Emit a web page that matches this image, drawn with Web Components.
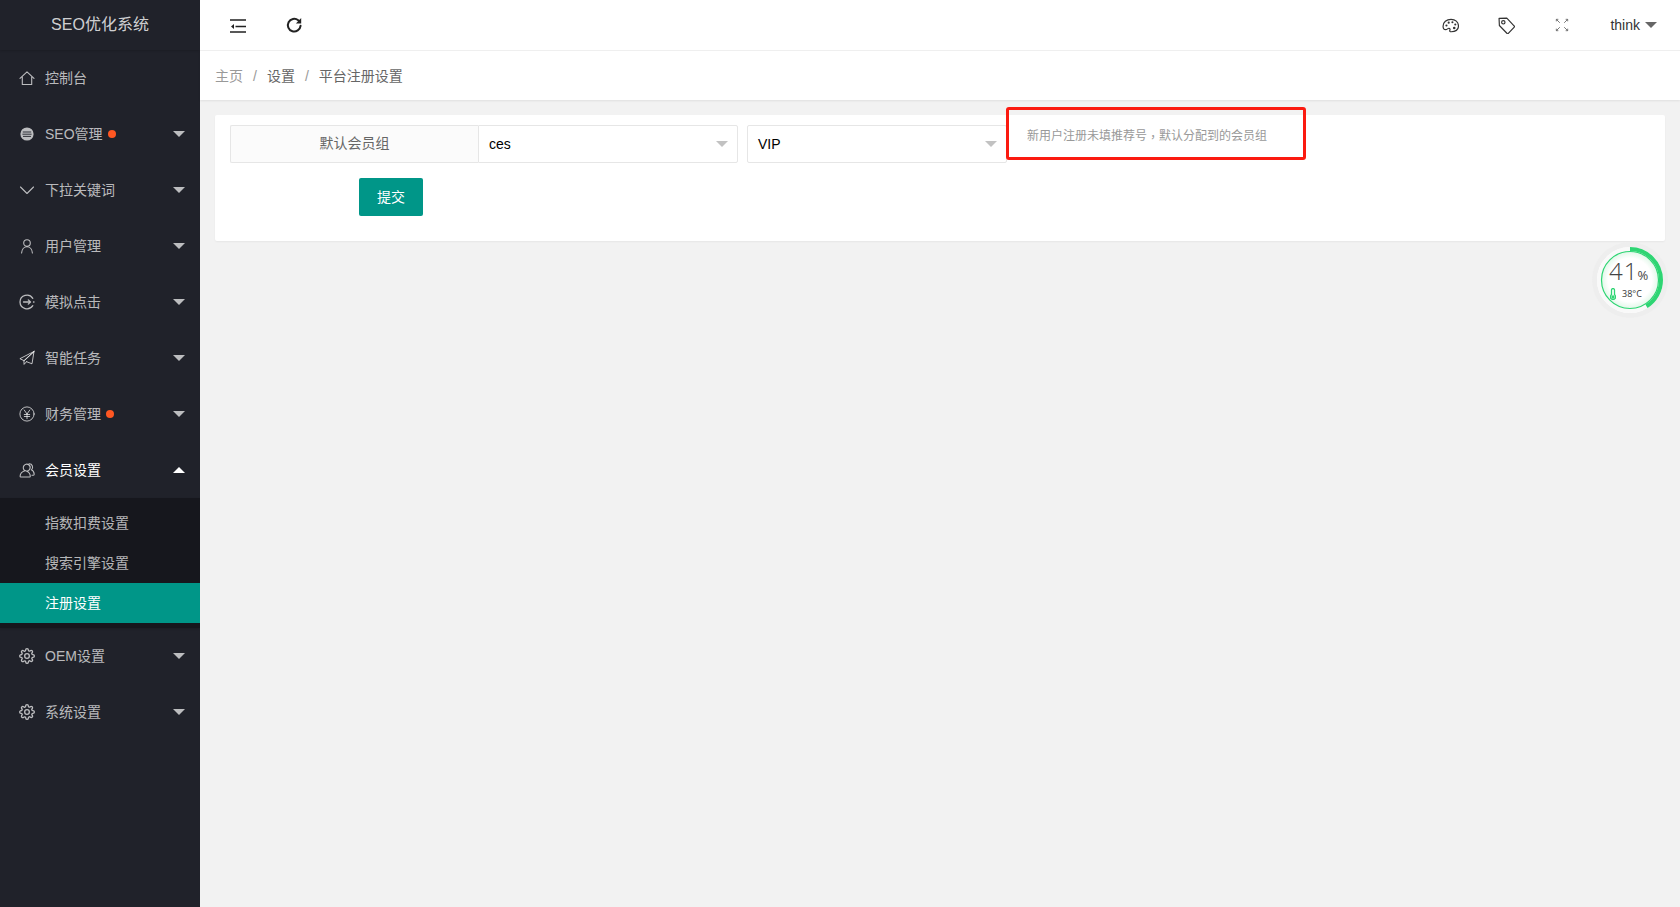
<!DOCTYPE html>
<html lang="zh">
<head>
<meta charset="utf-8">
<title>SEO优化系统</title>
<style>
html,body{margin:0;height:100%;overflow:hidden}
body{font:14px/1.5 "Liberation Sans","Noto Sans CJK SC",sans-serif;color:#666;background:#f2f2f2}
</style>
</head>
<body>
<admin-app>
  <admin-sidebar slot="side" brand="SEO优化系统">
    <nav-item icon="home">控制台</nav-item>
    <nav-item icon="list" dot arrow>SEO管理</nav-item>
    <nav-item icon="chev" arrow>下拉关键词</nav-item>
    <nav-item icon="user" arrow>用户管理</nav-item>
    <nav-item icon="click" arrow>模拟点击</nav-item>
    <nav-item icon="plane" arrow>智能任务</nav-item>
    <nav-item icon="yen" dot arrow>财务管理</nav-item>
    <nav-item icon="group" arrow open>会员设置</nav-item>
    <nav-sub>
      <nav-sub-item>指数扣费设置</nav-sub-item>
      <nav-sub-item>搜索引擎设置</nav-sub-item>
      <nav-sub-item active>注册设置</nav-sub-item>
    </nav-sub>
    <nav-item icon="gear" arrow>OEM设置</nav-item>
    <nav-item icon="gear" arrow>系统设置</nav-item>
  </admin-sidebar>
  <top-bar slot="main" user="think"></top-bar>
  <bread-crumb slot="main"><span>主页</span><span>设置</span><span>平台注册设置</span></bread-crumb>
  <form-card slot="main">
    <form-row label="默认会员组" hint="新用户注册未填推荐号，默认分配到的会员组">
      <form-select first>ces</form-select>
      <form-select>VIP</form-select>
    </form-row>
    <submit-button>提交</submit-button>
  </form-card>
  <cpu-gauge slot="main" percent="41" temp="38°C"></cpu-gauge>
</admin-app>
<script>
const ICONS={
home:'<path d="M1 8.400 8 1.800l7 6.600M3.300 7v7.500h9.400V7"/>',
list:'<circle cx="8" cy="8" r="6.600" fill="currentColor" stroke="none"/><path d="M4.200 6h7.600M3.800 8.200h8.400M4.400 10.400h7.200" stroke="#20222a" stroke-width=".9"/>',
chev:'<path d="M1.500 5 8 11.500 14.500 5"/>',
user:'<circle cx="8" cy="5" r="3.300"/><path d="M2.600 15c.2-3.600 2.400-6.300 5.400-6.300s5.200 2.700 5.400 6.300"/>',
click:'<path d="M13.800 4.300A7 7 0 0 0 1 8M13.800 11.700A7 7 0 0 1 1 8M4.500 8h7M9.300 5.900 11.500 8 9.300 10.100M14.500 8h.5" stroke-width="1.300"/>',
plane:'<path d="M15 1.500 .9 8.700l4 1.900zM15 1.500 4.900 10.600l.2 3.800 2.400-2.700M15 1.500l-2 12.300-5.500-2.100" stroke-width="1"/>',
yen:'<circle cx="8" cy="8" r="7.100" stroke-width="1"/><path d="m5.200 4 2.800 4 2.800-4M5.300 8.500h5.400M5.300 10.500h5.400M8 8v4.700" stroke-width="1"/>',
group:'<path d="M9.700 2.700A3.500 3.500 0 1 0 6 8.800c-2.800.8-4.800 2.700-4.900 5.500 0 .5.300.7.700.7h8.800c.4 0 .7-.2.700-.7-.1-2.800-2.100-4.700-4.900-5.500a3.500 3.500 0 0 0 3.300-6.100zM10 1.800a3.400 3.400 0 0 1 2.400 6c1.700.8 2.700 2.500 2.800 4.500 0 .6-.3.900-.7.900H13"/>',
gear:'<g transform="scale(.667)"><circle cx="12" cy="12" r="3.500" stroke-width="2"/><path d="M19.400 15a1.650 1.650 0 0 0 .33 1.820l.06.06a2 2 0 0 1 0 2.830 2 2 0 0 1-2.830 0l-.06-.06a1.650 1.650 0 0 0-1.820-.33 1.650 1.650 0 0 0-1 1.510V21a2 2 0 0 1-2 2 2 2 0 0 1-2-2v-.09A1.650 1.650 0 0 0 9 19.400a1.650 1.650 0 0 0-1.820.33l-.06.06a2 2 0 0 1-2.830 0 2 2 0 0 1 0-2.830l.06-.06a1.650 1.650 0 0 0 .33-1.820 1.650 1.650 0 0 0-1.510-1H3a2 2 0 0 1-2-2 2 2 0 0 1 2-2h.09A1.650 1.650 0 0 0 4.600 9a1.650 1.650 0 0 0-.33-1.820l-.06-.06a2 2 0 0 1 0-2.830 2 2 0 0 1 2.830 0l.06.06a1.650 1.650 0 0 0 1.820.33H9a1.650 1.650 0 0 0 1-1.510V3a2 2 0 0 1 2-2 2 2 0 0 1 2 2v.09a1.650 1.650 0 0 0 1 1.510 1.650 1.650 0 0 0 1.820-.33l.06-.06a2 2 0 0 1 2.830 0 2 2 0 0 1 0 2.830l-.06.06a1.650 1.650 0 0 0-.33 1.820V9a1.650 1.650 0 0 0 1.510 1H21a2 2 0 0 1 2 2 2 2 0 0 1-2 2h-.09a1.650 1.650 0 0 0-1.510 1z" stroke-width="2"/></g>',
menu:'<path d="M0 3h16M5.500 9.500H16M0 15h16" stroke-width="1.500" stroke-linecap="butt"/><path d="M4 7.100 1 9.500l3 2.400z" fill="currentColor" stroke="none"/>',
refresh:'<path d="M13.700 8.300A6 6 0 1 1 11.500 3L13 4.200" stroke-width="1.900"/><path d="M14.300 1v5h-5z" fill="currentColor" stroke="none"/>',
palette:'<path d="M8.500 2.200C4.200 2.200 1 5 1 8.600c0 2 1.200 3.300 2.500 3.300 1.500 0 1.800-1.300 3-1.300 1.300 0 1.200 1.300.8 2.100-.3.700.3 1.200 1.300 1.200 4 0 6.900-2 6.900-5.500 0-3.700-3-6.200-7-6.200z"/><circle cx="4.200" cy="8" r="1" fill="currentColor" stroke="none"/><circle cx="6.300" cy="5.300" r="1" fill="currentColor" stroke="none"/><circle cx="9.800" cy="4.900" r="1" fill="currentColor" stroke="none"/><circle cx="12.500" cy="7" r="1" fill="currentColor" stroke="none"/><circle cx="11.500" cy="10.300" r="1.200" fill="currentColor" stroke="none"/>',
tag:'<path d="M1 1.300 8.300 1l7 7.500c.3.300.3.700 0 1l-5.600 6c-.3.300-.8.300-1.100 0L1.300 8z"/><circle cx="5" cy="5" r="1.600"/>',
full:'<path d="M1.500 3.800V1.500h2.300M1.500 1.500 5.500 5.500M14.500 3.800V1.500h-2.300M14.500 1.500l-4 4M1.500 12.200v2.300h2.300M1.500 14.500l4-4M14.500 12.200v2.300h-2.300M14.500 14.500l-4-4" stroke-width="1" stroke-linecap="butt"/>'
};
function svgIcon(name,w,h){
  return `<svg viewBox="0 0 16 16" width="${w}" height="${h||w}" fill="none" stroke="currentColor" stroke-width="1.100" stroke-linecap="round" stroke-linejoin="round" aria-hidden="true">${ICONS[name]}</svg>`;
}
class Base extends HTMLElement{
  render(html){ if(!this.shadowRoot) this.attachShadow({mode:'open'}); this.shadowRoot.innerHTML=html; }
}
customElements.define('admin-app',class extends Base{connectedCallback(){this.render(`<style>
:host{display:grid;grid-template-columns:200px 1fr;height:907px;position:relative}
main{display:flex;flex-direction:column;min-width:0;position:relative}
</style><slot name="side"></slot><main><slot name="main"></slot></main>`)}});

customElements.define('admin-sidebar',class extends Base{connectedCallback(){this.render(`<style>
:host{display:block;background:#20222a;height:907px;overflow:hidden}
.logo{height:50px;line-height:50px;text-align:center;font-size:16px;color:rgba(255,255,255,.8);box-shadow:0 1px 2px rgba(0,0,0,.15)}
</style><div class="logo">${this.getAttribute('brand')}</div><slot></slot>`)}});

customElements.define('nav-item',class extends Base{connectedCallback(){
  const open=this.hasAttribute('open');
  this.render(`<style>
:host{display:flex;align-items:center;height:56px;padding-left:19px;color:${open?'#fff':'rgba(255,255,255,.7)'};font-size:14px;position:relative}
.ic{width:16px;height:16px;margin-right:10px;display:block;flex:none;color:rgba(255,255,255,.7)}
.ic svg{display:block}
.dot{width:8px;height:8px;border-radius:50%;background:#ff5722;margin-left:5px}
.arrow{position:absolute;right:15px;top:25px;width:0;height:0;border:6px solid transparent;${open?'border-bottom-color:#fff;border-top-width:0':'border-top-color:rgba(255,255,255,.7);border-bottom-width:0'}}
</style><span class="ic">${svgIcon(this.getAttribute('icon'),16)}</span><slot></slot>${this.hasAttribute('dot')?'<i class="dot"></i>':''}${this.hasAttribute('arrow')?'<i class="arrow"></i>':''}`);
}});
customElements.define('nav-sub',class extends Base{connectedCallback(){this.render(`<style>
:host{display:block;background:rgba(0,0,0,.3);padding:5px 0;box-shadow:0 1px 2px rgba(0,0,0,.15)}
</style><slot></slot>`)}});
customElements.define('nav-sub-item',class extends Base{connectedCallback(){
  const a=this.hasAttribute('active');
  this.render(`<style>
:host{display:block;height:40px;line-height:40px;padding-left:45px;font-size:14px;color:${a?'#fff':'rgba(255,255,255,.7)'};background:${a?'#009688':'transparent'}}
</style><slot></slot>`)}});

customElements.define('top-bar',class extends Base{connectedCallback(){this.render(`<style>
:host{display:flex;align-items:center;height:50px;background:#fff;border-bottom:1px solid #f0f0f0;color:#333;flex:none}
.l,.r{display:flex;align-items:center}
.l{gap:40px;padding-left:30px;color:#222}
.r{margin-left:auto;color:#333}
svg{display:block}
.pal{margin-right:39px}.tag{margin-right:40px}.full{margin-right:41px;color:#666}
.user{font-size:14px;color:#333;display:flex;align-items:center;margin-right:23px}
.user i{width:0;height:0;border:6px solid transparent;border-top-color:#666;border-bottom-width:0;margin-left:5px}
</style><div class="l"><span>${svgIcon('menu',16)}</span><span>${svgIcon('refresh',17)}</span></div>
<div class="r"><span class="pal">${svgIcon('palette',17)}</span><span class="tag">${svgIcon('tag',17)}</span><span class="full">${svgIcon('full',14)}</span><span class="user">${this.getAttribute('user')}<i></i></span></div>`)}});

customElements.define('bread-crumb',class extends Base{connectedCallback(){
  const parts=[...this.children].map(c=>c.textContent);
  const cols=['#999','#666','#666'];
  this.render(`<style>
:host{display:flex;align-items:center;height:47px;padding:2px 0 0 15px;background:#fff;box-shadow:0 1px 2px rgba(0,0,0,.08);flex:none;font-size:14px;position:relative}
.s{margin:0 10px;color:#999}
</style>`+parts.map((p,i)=>`<span style="color:${cols[i]}">${p}</span>`).join('<span class="s">/</span>'));
}});

customElements.define('form-card',class extends Base{connectedCallback(){this.render(`<style>
:host{display:block;margin:15px 15px 0;padding:10px 15px 25px;background:#fff;border-radius:2px;box-shadow:0 1px 2px rgba(0,0,0,.05)}
</style><slot></slot>`)}});

customElements.define('form-row',class extends Base{connectedCallback(){
  const hint=this.getAttribute('hint').replace('，','<span class="c" lang="zh-TW">，</span>');
  this.render(`<style>
:host{display:flex;align-items:stretch;height:38px;margin-bottom:15px}
.label{width:248px;box-sizing:border-box;border:1px solid #e6e6e6;border-right:0;border-radius:2px 0 0 2px;background:#fbfbfb;display:flex;align-items:center;justify-content:center;color:#666;font-size:14px;padding-bottom:2px}
.hint{position:relative;margin-left:20px;align-self:center;font-size:12px;color:#999;line-height:18px;height:18px;white-space:nowrap;top:-8px}
.c{font-family:"Noto Sans CJK TC",sans-serif;line-height:1;position:relative;top:2px}
.mark{position:absolute;left:-21px;top:-20px;width:300px;height:53px;box-sizing:border-box;border:3px solid #fb1a10;border-radius:3px}
</style><div class="label">${this.getAttribute('label')}</div><slot></slot>
<div class="hint">${hint}<div class="mark"></div></div>`)}});

customElements.define('form-select',class extends Base{connectedCallback(){
  const first=this.hasAttribute('first');
  this.render(`<style>
:host{display:flex;align-items:center;width:260px;box-sizing:border-box;height:38px;border:1px solid #e6e6e6;border-radius:${first?'0 2px 2px 0':'2px'};padding-left:10px;margin-right:${first?'9px':'0'};color:#000;font-size:14px;position:relative;background:#fff}
i{position:absolute;right:9px;top:15px;width:0;height:0;border:6px solid transparent;border-top-color:#c2c2c2;border-bottom-width:0}
</style><slot></slot><i></i>`)}});

customElements.define('submit-button',class extends Base{connectedCallback(){this.render(`<style>
:host{display:block;width:64px;height:38px;line-height:38px;margin-left:129px;text-align:center;background:#009688;color:#fff;border-radius:2px;font-size:14px}
</style><slot></slot>`)}});

customElements.define('cpu-gauge',class extends Base{connectedCallback(){
  const p=+this.getAttribute('percent'),r=31,c=2*Math.PI*r;
  this.render(`<style>
:host{position:absolute;right:12px;top:242px;width:76px;height:76px;border-radius:50%;background:#eeeeee;display:flex;align-items:center;justify-content:center}
.disc{width:66px;height:66px;box-sizing:border-box;padding:12px 0 0 12px;border-radius:50%;background:radial-gradient(circle closest-side,#fff 66%,#e3f8ea 85%,#fff 88%);position:relative;display:flex;flex-direction:column;align-items:flex-start;font-family:"Open Sans","Liberation Sans",sans-serif}
svg.ring{position:absolute;inset:0}
.big{position:relative;font-size:24px;font-weight:300;line-height:24px;color:#444;letter-spacing:1px;white-space:nowrap}
.big small{font-size:13px;letter-spacing:0;font-weight:400;margin-left:-1px}
.t{position:relative;display:flex;align-items:center;gap:6px;font-size:9px;line-height:12px;color:#333;margin:1px 0 0 1px}
.t svg{display:block}
</style><div class="disc"><svg class="ring" width="66" height="66" viewBox="0 0 66 66" fill="none">
<circle cx="33" cy="33" r="${r}" stroke="#f9f9f9" stroke-width="4"/>
<circle cx="33" cy="33" r="28.500" stroke="#2ed573" stroke-width="1.200"/>
<circle cx="33" cy="33" r="${r}" stroke="#2ed573" stroke-width="4" stroke-dasharray="${c*p/100} ${c}" transform="rotate(-90 33 33)"/>
</svg><div class="big">${p}<small>%</small></div>
<div class="t"><svg width="6" height="12" viewBox="0 0 6 12" fill="none" stroke="#2ed573" stroke-width="1.300"><path d="M1.500 6.800V2a1.500 1.500 0 0 1 3 0v4.800a2.600 2.600 0 1 1-3 0z"/><circle cx="3" cy="9" r="1" fill="#2ed573"/></svg><span>${this.getAttribute('temp')}</span></div></div>`);
}});
</script>
</body>
</html>
